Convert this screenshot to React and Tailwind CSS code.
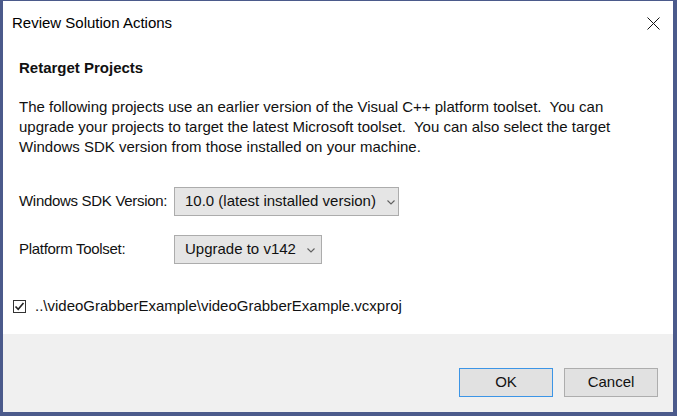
import React from 'react';

function Chevron() {
  return (
    <svg width="8" height="5" viewBox="0 0 8 5" className="ml-[11px] mt-[1px]">
      <path d="M0.5 0.5 L4 4 L7.5 0.5" fill="none" stroke="#606060" strokeWidth="1.1" />
    </svg>
  );
}

function Dropdown({ value, width }) {
  return (
    <div className={`h-[29px] ${width} shrink-0 flex items-center pl-[10px] bg-[#e5e5e5] border border-[#acacac] text-[#111]`}>
      <span>{value}</span>
      <Chevron />
    </div>
  );
}

export default function App() {
  return (
    <div
      className="w-[677px] h-[416px] flex flex-col bg-white border-l-[3px] border-t border-r-[4px] border-b-[4px] border-[#4b5a8b] text-[15px] text-[#111]"
      style={{ fontFamily: '"Liberation Sans", Arial, sans-serif' }}
    >
      {/* title bar */}
      <div className="h-[44px] flex items-center justify-between pl-[9px] pr-[13px]">
        <span className="text-[15px] text-black">Review Solution Actions</span>
        <svg width="13" height="13" viewBox="0 0 13 13">
          <path d="M0.5 0.5 L12.5 12.5 M12.5 0.5 L0.5 12.5" stroke="#111" strokeWidth="1" />
        </svg>
      </div>

      {/* body */}
      <div className="flex-1 px-[16px]">
        <div className="mt-[13px] h-[20px] leading-[20px] font-bold text-[15px]">Retarget Projects</div>
        <p className="mt-[19px] leading-[20px] whitespace-pre">
          {'The following projects use an earlier version of the Visual C++ platform toolset.  You can\nupgrade your projects to target the latest Microsoft toolset.  You can also select the target\nWindows SDK version from those installed on your machine.'}
        </p>

        <div className="mt-[30px] flex items-center">
          <span className="w-[155px] shrink-0 tracking-[-0.3px]">Windows SDK Version:</span>
          <Dropdown value="10.0 (latest installed version)" width="w-[225px]" />
        </div>
        <div className="mt-[19px] flex items-center">
          <span className="w-[155px] shrink-0 tracking-[-0.3px]">Platform Toolset:</span>
          <Dropdown value="Upgrade to v142" width="w-[148px]" />
        </div>

        <div className="mt-[31px] flex items-center -ml-[6px]">
          <div className="w-[13px] h-[13px] border border-[#333] bg-white flex items-center justify-center">
            <svg width="11" height="11" viewBox="0 0 11 11">
              <path d="M1.5 5.5 L4.2 8.3 L9.5 2" fill="none" stroke="#222" strokeWidth="1.6" />
            </svg>
          </div>
          <span className="ml-[9px]">..\videoGrabberExample\videoGrabberExample.vcxproj</span>
        </div>
      </div>

      {/* footer */}
      <div className="h-[78px] bg-[#f0f0f0] flex items-start justify-end pt-[34px] pr-[15px] gap-[11px]">
        <button className="w-[94px] h-[29px] bg-[#e1e1e1] border border-[#3c95e6] text-[#111]">OK</button>
        <button className="w-[94px] h-[29px] bg-[#e1e1e1] border border-[#adadad] text-[#111]">Cancel</button>
      </div>
    </div>
  );
}
